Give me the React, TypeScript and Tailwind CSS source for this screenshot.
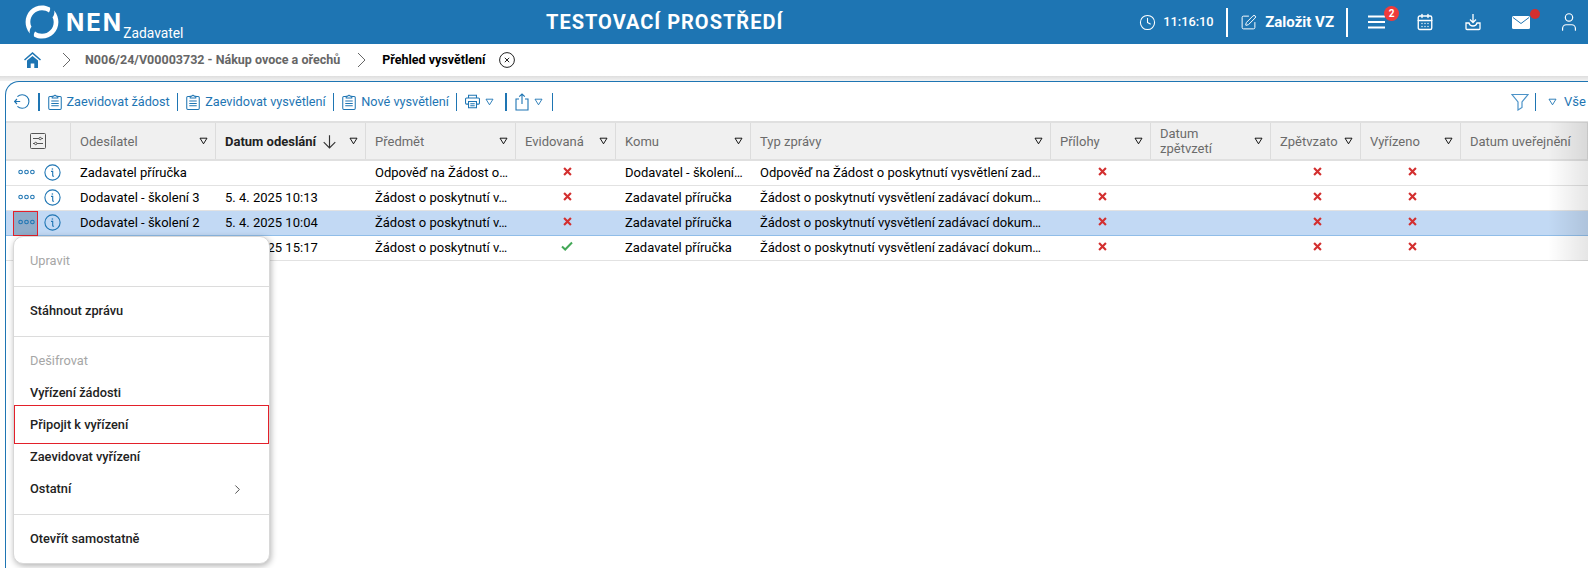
import { ChevronRight, CalendarDays, Clock, SquarePen, User } from "lucide-react";

const ROBOTO = "font-['Roboto',sans-serif]";

type Col = { label: string; w: string; bold?: boolean; sort?: boolean; noFilter?: boolean };

const columns: Col[] = [
  { label: "Odesílatel", w: "w-[145px]" },
  { label: "Datum odeslání", w: "w-[150px]", bold: true, sort: true },
  { label: "Předmět", w: "w-[150px]" },
  { label: "Evidovaná", w: "w-[100px]" },
  { label: "Komu", w: "w-[135px]" },
  { label: "Typ zprávy", w: "w-[300px]" },
  { label: "Přílohy", w: "w-[100px]" },
  { label: "Datum zpětvzetí", w: "w-[120px]" },
  { label: "Zpětvzato", w: "w-[90px]" },
  { label: "Vyřízeno", w: "w-[100px]" },
  { label: "Datum uveřejnění", w: "w-[127px]", noFilter: true },
];

type Row = {
  from: string;
  date: string;
  subject: string;
  registered: boolean;
  to: string;
  type: string;
  selected?: boolean;
};

const rows: Row[] = [
  {
    from: "Zadavatel příručka",
    date: "",
    subject: "Odpověď na Žádost o…",
    registered: false,
    to: "Dodavatel - školení…",
    type: "Odpověď na Žádost o poskytnutí vysvětlení zad…",
  },
  {
    from: "Dodavatel - školení 3",
    date: "5. 4. 2025 10:13",
    subject: "Žádost o poskytnutí v…",
    registered: false,
    to: "Zadavatel příručka",
    type: "Žádost o poskytnutí vysvětlení zadávací dokum…",
  },
  {
    from: "Dodavatel - školení 2",
    date: "5. 4. 2025 10:04",
    subject: "Žádost o poskytnutí v…",
    registered: false,
    to: "Zadavatel příručka",
    type: "Žádost o poskytnutí vysvětlení zadávací dokum…",
    selected: true,
  },
  {
    from: "Dodavatel - školení 1",
    date: "4. 4. 2025 15:17",
    subject: "Žádost o poskytnutí v…",
    registered: true,
    to: "Zadavatel příručka",
    type: "Žádost o poskytnutí vysvětlení zadávací dokum…",
  },
];

function Tri({ className = "text-[#888]" }: { className?: string }) {
  return (
    <svg width="9" height="8" viewBox="0 0 9 8" className={`shrink-0 ${className}`}>
      <path d="M1 1.200h7L4.500 6.800z" fill="none" stroke="currentColor" strokeWidth="0.9" />
    </svg>
  );
}

function Cross() {
  return (
    <svg width="9" height="9" viewBox="0 0 10 10" className="mb-[4px]">
      <path d="M1.200 1.200l7.600 7.600M8.800 1.200L1.200 8.800" stroke="#d32f2f" strokeWidth="2.400" />
    </svg>
  );
}

function Check() {
  return (
    <svg width="12" height="10" viewBox="0 0 12 10" className="mb-[4px]">
      <path d="M1 5.500l3.200 3L11 1.500" fill="none" stroke="#43a857" strokeWidth="2" />
    </svg>
  );
}

function Clip() {
  return (
    <svg width="14" height="18" viewBox="0 0 15 18" className="shrink-0" fill="none" stroke="#1e75b3" strokeWidth="1.1">
      <path d="M4.500 3H2a1.200 1.200 0 0 0-1.200 1.200v11.600A1.200 1.200 0 0 0 2 17h11a1.200 1.200 0 0 0 1.200-1.200V4.200A1.200 1.200 0 0 0 13 3h-2.500" />
      <path d="M4.500 4.600V2.800h1.600a1.500 1.500 0 0 1 2.800 0h1.600v1.800z" />
      <path d="M3.500 8h8M3.500 10.500h8M3.500 13h8" />
    </svg>
  );
}

function Sep({ className = "mx-[7px]" }: { className?: string }) {
  return <div className={`h-[18px] w-[1.5px] shrink-0 bg-[#1e75b3] ${className}`} />;
}

function Crumb({ className }: { className: string }) {
  return (
    <svg width="9" height="16" viewBox="0 0 9 16" fill="none" stroke="#666" strokeWidth="1" className={`shrink-0 ${className}`}>
      <path d="M1 1l7 7-7 7" />
    </svg>
  );
}

function Dots() {
  return (
    <svg width="17" height="6" viewBox="0 0 17 6" fill="none" stroke="#1e75b3" strokeWidth="1.1">
      <circle cx="2.600" cy="3" r="1.800" />
      <circle cx="8.500" cy="3" r="1.800" />
      <circle cx="14.400" cy="3" r="1.800" />
    </svg>
  );
}

function Info() {
  return (
    <svg width="17" height="17" viewBox="0 0 17 17" fill="none" stroke="#1e75b3" strokeWidth="1.1">
      <circle cx="8.500" cy="8.500" r="7.600" />
      <path d="M7 7.400h1.700v4c0 .8.500 1 1.200.6" />
      <path d="M8.400 4.400v1.200" strokeWidth="1.4" />
    </svg>
  );
}

function Logo() {
  return (
    <svg width="34" height="36" viewBox="0 0 34 36" className="shrink-0">
      <path
        d="M25 3.600C22.400 2 19.600 1.400 17 1.400 7.800 1.400.6 8.800.6 18c0 3.800 1.200 8 4.200 11.600C4.300 27 5 24.600 6.500 22.700c-.8-1.500-1.200-3-1.200-4.700C5.300 11.400 10.400 6.200 17 6.200c2.600 0 4.900.8 6.900 2.200C25 6.800 25.400 5.400 25 3.600z"
        fill="#fff"
      />
      <path
        d="M29.200 6.400C29.700 9 29 11.400 27.500 13.300c.8 1.500 1.200 3 1.200 4.700 0 6.600-5.100 11.800-11.700 11.800-2.600 0-4.900-.8-6.900-2.200-1.100 1.600-1.500 3-1.100 4.800 2.600 1.600 5.400 2.200 8 2.200 9.200 0 16.400-7.400 16.400-16.600 0-3.800-1.200-8-4.200-11.600z"
        fill="#fff"
      />
    </svg>
  );
}

function TopBar() {
  return (
    <header className="flex h-[44px] items-center bg-[#1e75b3] text-white">
      <div className="flex w-[546px] shrink-0 items-center pl-[25px]">
        <Logo />
        <div className="ml-[7px] mt-[3px] text-[24px] font-bold leading-none tracking-[2px] font-['Inter',sans-serif]">NEN</div>
        <div className="mt-[23px] text-[13.800px] leading-none">Zadavatel</div>
      </div>
      <div className="text-[20px] font-bold tracking-[1px]">TESTOVACÍ PROSTŘEDÍ</div>
      <div className="ml-auto flex items-center">
        <Clock size={17} strokeWidth={1.5} className="-ml-[1px]" />
        <span className="ml-[7px] w-[51px] text-[12.800px] font-medium">11:16:10</span>
        <div className="ml-[12px] h-[29px] w-[2px] bg-white" />
        <SquarePen size={17} strokeWidth={1.4} className="ml-[12px]" />
        <span className="ml-[8px] text-[15px] font-bold">Založit VZ</span>
        <div className="ml-[12px] h-[29px] w-[2px] bg-white" />
        <div className="relative ml-[20px]">
          <svg width="17" height="14" viewBox="0 0 17 14" className="block" stroke="#fff" strokeWidth="2">
            <path d="M0 1.500h17M0 7h17M0 12.500h17" />
          </svg>
          <span className="absolute -right-[14px] -top-[9px] flex h-[15px] w-[15px] items-center justify-center rounded-full bg-[#ef3b3b] text-[10px] font-bold">
            2
          </span>
        </div>
        <CalendarDays size={18} strokeWidth={1.8} className="ml-[31px]" />
        <svg width="16" height="18" viewBox="0 0 16 18" fill="none" stroke="#fff" strokeWidth="1.3" className="ml-[31px]">
          <path d="M8 1v8M5 6.500L8 9.500l3-3" />
          <path d="M4 10H1v5.500a1 1 0 0 0 1 1h12a1 1 0 0 0 1-1V10h-3c-.5 2-2 3-4 3s-3.500-1-4-3z" />
        </svg>
        <div className="relative ml-[31px]">
          <svg width="18" height="13" viewBox="0 0 18 13" className="block">
            <rect width="18" height="13" rx="1.500" fill="#fff" />
            <path d="M1 1.500l8 6 8-6" fill="none" stroke="#1e75b3" strokeWidth="1" />
          </svg>
          <span className="absolute -right-[10px] -top-[7px] h-[10px] w-[10px] rounded-full bg-[#d32f2f]" />
        </div>
        <User size={22} strokeWidth={1.3} className="ml-[28px] mr-[8px]" />
      </div>
    </header>
  );
}

function Breadcrumb() {
  return (
    <nav className="flex h-[32px] items-center bg-white">
      <svg width="17" height="16" viewBox="0 0 17 16" className="ml-[24px] shrink-0" fill="#1e75b3">
        <path d="M8.500 0L0 7.500l1 1.100L8.500 2l7.500 6.600 1-1.100z" />
        <path d="M3 8.500L8.500 4 14 8.500V16h-3.700v-4.500H6.700V16H3z" />
      </svg>
      <Crumb className="ml-[21px]" />
      <span className="ml-[14px] text-[12.500px] font-bold text-[#666]">N006/24/V00003732 - Nákup ovoce a ořechů</span>
      <Crumb className="ml-[17px]" />
      <span className="ml-[16px] text-[12.500px] font-bold text-black">Přehled vysvětlení</span>
      <svg width="16" height="16" viewBox="0 0 16 16" className="ml-[14px]" fill="none" stroke="#222" strokeWidth="1">
        <circle cx="8" cy="8" r="7.400" />
        <path d="M5.800 5.800l4.400 4.400M10.200 5.800l-4.400 4.400" />
      </svg>
    </nav>
  );
}

function ToolButton({ label }: { label: string }) {
  return (
    <>
      <div className="ml-[1px]"><Clip /></div>
      <span className="ml-[5px] whitespace-nowrap">{label}</span>
      <Sep />
    </>
  );
}

function Toolbar() {
  return (
    <div className="flex h-[39px] items-center text-[12.700px] text-[#1e75b3]">
      <svg width="17" height="17" viewBox="0 0 17 17" fill="none" stroke="#1e75b3" strokeWidth="1.100" className="ml-[8px] shrink-0">
        <path d="M3.400 3.600A6.800 6.800 0 1 1 3.400 13.400" />
        <path d="M.6 8.500h5.600M3 6l-2.400 2.500L3 11" />
      </svg>
      <Sep />
      <ToolButton label="Zaevidovat žádost" />
      <ToolButton label="Zaevidovat vysvětlení" />
      <ToolButton label="Nové vysvětlení" />
      <svg width="15" height="15" viewBox="0 0 17 16" fill="none" stroke="#1e75b3" strokeWidth="1.200" className="ml-[1px] shrink-0">
        <path d="M4 4V1h9v3" />
        <path d="M4 11H1.800A1.200 1.200 0 0 1 .6 9.800V5.200A1.200 1.200 0 0 1 1.800 4h13.400a1.200 1.200 0 0 1 1.200 1.200v4.600a1.200 1.200 0 0 1-1.200 1.200H13" />
        <path d="M4 8h9v7H4zM6 10.500h5M6 12.800h5" />
      </svg>
      <Tri className="ml-[5px] text-[#1e75b3]" />
      <Sep className="ml-[11px]" />
      <svg width="14" height="18" viewBox="0 0 14 18" fill="none" stroke="#1e75b3" strokeWidth="1.100" className="ml-[8px] shrink-0">
        <path d="M4 6H1v11h12V6h-3M7 11V1M4.200 3.600L7 1l2.800 2.600" />
      </svg>
      <Tri className="ml-[5px] text-[#1e75b3]" />
      <Sep className="ml-[9px]" />
      <svg width="18" height="18" viewBox="0 0 18 18" fill="none" stroke="#4c93c8" strokeWidth="1.200" className="ml-auto shrink-0">
        <path d="M1 1.500h16L11 9v5.500l-4 2.500V9z" />
      </svg>
      <Sep className="ml-[6px]" />
      <Tri className="ml-[12px] text-[#1e75b3]" />
      <span className="ml-[7px] w-[24px] shrink-0 overflow-hidden whitespace-nowrap text-[13px]">Vše</span>
    </div>
  );
}

function HeaderCell({ col }: { col: Col }) {
  return (
    <div className={`flex ${col.w} shrink-0 items-center border-r border-[#dcdcdc] pl-[9px] pr-[7px]`}>
      <span className={`leading-[15px] ${col.label === "Datum zpětvzetí" ? "w-[70px]" : "whitespace-nowrap"} ${col.bold ? "font-bold text-[#222]" : "text-[#6b6b6b]"}`}>
        {col.label}
      </span>
      {col.sort && (
        <svg width="15" height="15" viewBox="0 0 13 13" fill="none" stroke="#333" strokeWidth="1" className="ml-[6px] shrink-0">
          <path d="M6.500 1v11M1.500 7l5 5 5-5" />
        </svg>
      )}
      {!col.noFilter && <Tri className="ml-auto" />}
    </div>
  );
}

function Cell({ w, children, center }: { w: string; children?: React.ReactNode; center?: boolean }) {
  return (
    <div className={`flex ${w} shrink-0 items-center whitespace-nowrap ${center ? "justify-center pl-[2px]" : "pl-[9px] pr-[4px]"}`}>
      {children}
    </div>
  );
}

function TableRow({ row }: { row: Row }) {
  const bg = row.selected ? "border-[#90bde8] bg-[#c2d9f4]" : "border-[#e2e2e2] bg-white";
  return (
    <div className={`flex h-[25px] border-b text-black ${bg}`}>
      <div className="relative flex w-[65px] shrink-0 items-center">
        {row.selected && <div className="absolute left-[7px] top-0 h-[25px] w-[25px] border border-[#e3202a] bg-[#8facc9]" />}
        <div className="relative ml-[12px] mb-[2px]"><Dots /></div>
        <div className="relative ml-[9px] mb-[2px]"><Info /></div>
      </div>
      <Cell w="w-[145px]">{row.from}</Cell>
      <Cell w="w-[150px]">{row.date}</Cell>
      <Cell w="w-[150px]">{row.subject}</Cell>
      <Cell w="w-[100px]" center>{row.registered ? <Check /> : <Cross />}</Cell>
      <Cell w="w-[135px]">{row.to}</Cell>
      <Cell w="w-[300px]">{row.type}</Cell>
      <Cell w="w-[100px]" center><Cross /></Cell>
      <Cell w="w-[120px]" />
      <Cell w="w-[90px]" center><Cross /></Cell>
      <Cell w="w-[100px]" center><Cross /></Cell>
      <Cell w="w-[127px]" />
    </div>
  );
}

function MenuItem({ children, disabled }: { children: React.ReactNode; disabled?: boolean }) {
  return (
    <div className={`flex h-[32px] items-center px-[16px] ${disabled ? "font-normal text-[#a6a6a6]" : "font-medium text-[#222]"}`}>
      {children}
    </div>
  );
}

function ContextMenu() {
  return (
    <div className="absolute left-[7px] top-[154px] w-[257px] rounded-[10px] border border-[#d8d8d8] bg-white text-[12.800px] shadow-[1px_2px_6px_rgba(0,0,0,0.3)]">
      <div className="flex h-[50px] flex-col justify-center border-b border-[#dcdcdc] pb-[1px]">
        <MenuItem disabled>Upravit</MenuItem>
      </div>
      <div className="flex h-[50px] flex-col justify-center border-b border-[#dcdcdc] pb-[2px]">
        <MenuItem>Stáhnout zprávu</MenuItem>
      </div>
      <div className="relative border-b border-[#dcdcdc] pb-[9px] pt-[8px]">
        <MenuItem disabled>Dešifrovat</MenuItem>
        <MenuItem>Vyřízení žádosti</MenuItem>
        <MenuItem>Připojit k vyřízení</MenuItem>
        <MenuItem>Zaevidovat vyřízení</MenuItem>
        <MenuItem>
          Ostatní
          <ChevronRight size={15} strokeWidth={1.500} className="ml-auto mr-[8px] text-[#444]" />
        </MenuItem>
        <div className="absolute left-0 top-[68px] h-[39px] w-[255px] border border-[#e3202a]" />
      </div>
      <div className="flex h-[48px] flex-col justify-center">
        <MenuItem>Otevřít samostatně</MenuItem>
      </div>
    </div>
  );
}

export default function App() {
  return (
    <div className={`relative h-[568px] w-[1588px] overflow-hidden bg-white ${ROBOTO}`}>
      <TopBar />
      <Breadcrumb />
      <div className="h-[5px] bg-gradient-to-b from-[#dedede] to-[#f2f2f2]" />
      <div className="relative ml-[5px] h-[487px] rounded-tl-[14px] border-l-[1.500px] border-t-[1.500px] border-[#1e75b3] bg-white">
        <Toolbar />
        <div className="text-[13px]">
          <div className="flex h-[40px] border-y-2 border-[#e0e0e0] bg-[#f0f0f0]">
            <div className="flex w-[65px] shrink-0 items-center justify-center border-r border-[#dcdcdc]">
              <svg width="16" height="16" viewBox="0 0 16 16" fill="none" stroke="#555" strokeWidth="1">
                <rect x=".5" y=".5" width="15" height="15" rx="1" />
                <path d="M3 5.500h6M11.500 5.500H13M3 10.500h1.500M7 10.500h6" />
                <circle cx="10.200" cy="5.500" r="1.200" />
                <circle cx="5.700" cy="10.500" r="1.200" />
              </svg>
            </div>
            {columns.map((c) => (
              <HeaderCell key={c.label} col={c} />
            ))}
          </div>
          {rows.map((r) => (
            <TableRow key={r.from} row={r} />
          ))}
        </div>
        <div className="absolute bottom-[307px] right-0 top-[40px] w-[40px] bg-gradient-to-r from-transparent to-black/10" />
        <ContextMenu />
      </div>
    </div>
  );
}
